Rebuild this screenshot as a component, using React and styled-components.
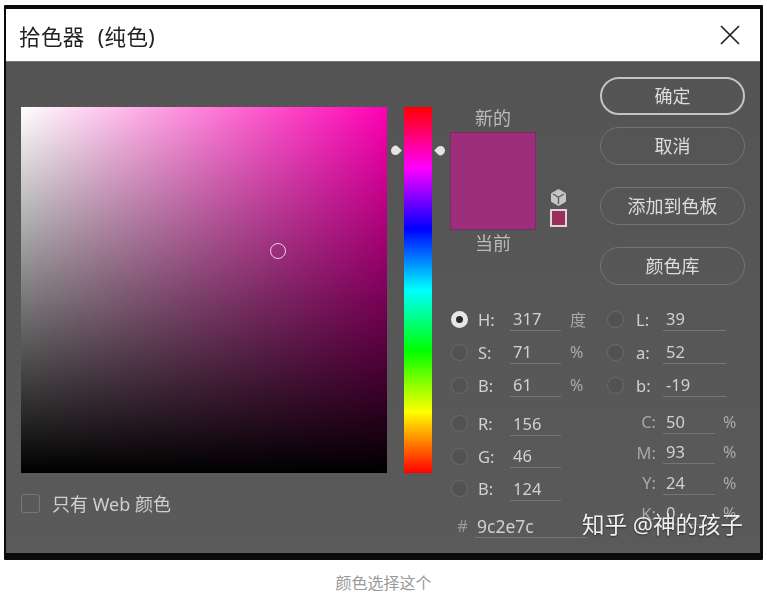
import styled, { createGlobalStyle } from 'styled-components';

const FONT = '"Noto Sans", "Noto Sans CJK SC", sans-serif';

const GlobalStyle = createGlobalStyle`
  body {
    margin: 0;
    background: #fff;
    font-family: ${FONT};
  }
`;

const Page = styled.div`
  width: 767px;
  height: 597px;
  padding: 5px 0 0 4px;
  box-sizing: border-box;
  overflow: hidden;
`;

const Frame = styled.div`
  position: relative;
  width: 759px;
  height: 555px;
  box-sizing: border-box;
  padding: 4px 3px 7px 2px;
  background: #0c090c;
  border-radius: 1px;
  filter: blur(0.45px);
`;

const Dialog = styled.div`
  height: 100%;
  display: flex;
  flex-direction: column;
`;

const TitleBar = styled.div`
  height: 53px;
  flex: none;
  display: flex;
  align-items: center;
  justify-content: space-between;
  padding: 0 20px 0 13px;
  background: #fff;
  border-bottom: 1px solid #777;
  box-sizing: border-box;
`;

const Title = styled.div`
  font-size: 21.5px;
  word-spacing: 7px;
  letter-spacing: 0.4px;
  color: #222;
`;

const Body = styled.div`
  flex: 1;
  display: flex;
  padding-left: 15px;
  background: linear-gradient(#545454, #5a5a5a);
`;

const LeftCol = styled.div`
  width: 366px;
  flex: none;
  padding-top: 45px;
`;

const Picker = styled.div`
  position: relative;
  height: 366px;
  background:
    linear-gradient(to top, #000, rgba(0, 0, 0, 0)),
    linear-gradient(to right, #fff, #ff00b4);
`;

const Marker = styled.span`
  position: absolute;
  left: 249px;
  top: 136px;
  width: 16px;
  height: 16px;
  box-sizing: border-box;
  border: 1.5px solid #f0d0e8;
  border-radius: 50%;
`;

const WebRow = styled.div`
  display: flex;
  align-items: center;
  gap: 12px;
  margin-top: 17px;
  font-size: 18px;
  color: #d0d0d0;
`;

const Checkbox = styled.span`
  width: 19px;
  height: 19px;
  box-sizing: border-box;
  border: 1.5px solid #777;
  border-radius: 3px;
`;

const HueBar = styled.div`
  position: relative;
  flex: none;
  width: 28px;
  height: 366px;
  margin: 45px 0 0 17px;
  background: linear-gradient(#f00, #f0f 16.67%, #00f 33.33%, #0ff 50%, #0f0 66.67%, #ff0 83.33%, #f00);
`;

const Arrow = styled.span`
  position: absolute;
  top: 39px;
  ${(p) => (p.$side === 'left' ? 'left: -13px;' : 'right: -13px;')}
  width: 9px;
  height: 9px;
  background: #e4e4e4;
  border-radius: 40% 0 50% 50%;
  transform: rotate(${(p) => (p.$side === 'left' ? 45 : 225)}deg);
`;

const RightCol = styled.div`
  flex: none;
  width: 300px;
  margin-left: 18px;
`;

const TopRight = styled.div`
  display: flex;
  height: 240.5px;
`;

const ColorCol = styled.div`
  width: 150px;
  flex: none;
  padding-top: 44px;
`;

const SwatchLabel = styled.div`
  width: 86px;
  height: 24px;
  line-height: 24px;
  text-align: center;
  font-size: 18px;
  color: #bbb;
`;

const SwatchRow = styled.div`
  display: flex;
  margin: 2px 0 1px;
`;

const Swatch = styled.div`
  width: 86px;
  height: 98px;
  box-sizing: border-box;
  border: 1px solid #7b2a68;
  background: #9c2e7c;
`;

const SwatchIcons = styled.div`
  display: flex;
  flex-direction: column;
  align-items: center;
  align-self: flex-end;
  gap: 3px;
  margin: 0 0 3px 14px;
`;

const WebSwatch = styled.span`
  width: 17px;
  height: 18px;
  box-sizing: border-box;
  border: 2px solid #e0d4dc;
  background: #9c2e5c;
`;

const Buttons = styled.div`
  display: flex;
  flex-direction: column;
  padding-top: 15px;
`;

const Button = styled.button`
  width: 145px;
  height: 38px;
  margin-top: ${(p) => p.$gap || 0}px;
  padding: 0 0 3px;
  border-radius: 19px;
  border: ${(p) => (p.$primary ? '2px solid #c4c4c4' : '1.5px solid #747474')};
  background: transparent;
  color: #ddd;
  font-family: ${FONT};
  font-size: 18px;
`;

const Fields = styled.div`
  display: flex;
`;

const FieldCol = styled.div`
  width: ${(p) => p.$width}px;
  flex: none;
`;

const Row = styled.div`
  display: flex;
  align-items: center;
  height: ${(p) => p.$height || 33}px;
  margin-top: ${(p) => p.$gap || 0}px;
  font-size: 16.5px;
  color: #d0d0d0;
`;

const Radio = styled.span`
  width: 17px;
  height: 17px;
  flex: none;
  box-sizing: border-box;
  margin-left: ${(p) => p.$offset || 0}px;
  border-radius: 50%;
  ${(p) =>
    p.$on
      ? 'border: 5px solid #e6e6e6; background: #2c2c2c;'
      : 'border: 1.5px solid #6c6c6c; background: #525252;'}
`;

const Label = styled.span`
  width: ${(p) => p.$width}px;
  flex: none;
  margin-left: ${(p) => p.$gap || 0}px;
  text-align: ${(p) => p.$align || 'left'};
  color: ${(p) => p.$color || '#d0d0d0'};
`;

const Value = styled.span`
  width: ${(p) => p.$width}px;
  height: 24px;
  flex: none;
  box-sizing: border-box;
  margin-left: ${(p) => p.$gap || 0}px;
  padding-left: ${(p) => p.$pad ?? 3}px;
  font-size: ${(p) => p.$size || 16.5}px;
  line-height: 24px;
  border-bottom: 1.5px solid #757575;
`;

const Unit = styled.span`
  margin-left: ${(p) => p.$gap}px;
  color: #aaa;
  font-size: ${(p) => p.$size || 16}px;
`;

const Watermark = styled.div`
  position: absolute;
  right: 20px;
  top: 504px;
  font-size: 22.5px;
  line-height: 32px;
  color: #f0f0f0;
  white-space: nowrap;
  text-shadow: 0 1px 2px rgba(0, 0, 0, 0.5);
`;

const Caption = styled.div`
  margin-top: 12px;
  padding-right: 4px;
  text-align: center;
  font-size: 16px;
  line-height: 22px;
  color: #999;
`;

const hsb = [
  { key: 'H', value: '317', unit: '度', on: true },
  { key: 'S', value: '71', unit: '%' },
  { key: 'B', value: '61', unit: '%' },
];
const rgb = [
  { key: 'R', value: '156' },
  { key: 'G', value: '46' },
  { key: 'B', value: '124' },
];
const lab = [
  { key: 'L', value: '39' },
  { key: 'a', value: '52' },
  { key: 'b', value: '-19' },
];
const cmyk = [
  { key: 'C', value: '50' },
  { key: 'M', value: '93' },
  { key: 'Y', value: '24' },
  { key: 'K', value: '0' },
];

const CloseIcon = () => (
  <svg width="20" height="20" viewBox="0 0 20 20" fill="none" stroke="#222" strokeWidth="1.7">
    <path d="M1 1 L19 19 M19 1 L1 19" />
  </svg>
);

const CubeIcon = () => (
  <svg width="17" height="17" viewBox="0 0 17 17">
    <path d="M8.5 0.5 L15.5 4.5 V12.5 L8.5 16.5 L1.5 12.5 V4.5 Z" fill="#c6c6c6" stroke="#c6c6c6" strokeLinejoin="round" />
    <path d="M3 5 L8.5 8.2 L14 5 M8.5 8.2 V15" fill="none" stroke="#5a5a5a" strokeWidth="1.3" />
  </svg>
);

export default function App() {
  return (
    <Page>
      <GlobalStyle />
      <Frame>
        <Dialog>
          <TitleBar>
            <Title>拾色器 (纯色)</Title>
            <CloseIcon />
          </TitleBar>
          <Body>
            <LeftCol>
              <Picker>
                <Marker />
              </Picker>
              <WebRow>
                <Checkbox />
                <span>只有 Web 颜色</span>
              </WebRow>
            </LeftCol>
            <HueBar>
              <Arrow $side="left" />
              <Arrow $side="right" />
            </HueBar>
            <RightCol>
              <TopRight>
                <ColorCol>
                  <SwatchLabel>新的</SwatchLabel>
                  <SwatchRow>
                    <Swatch />
                    <SwatchIcons>
                      <CubeIcon />
                      <WebSwatch />
                    </SwatchIcons>
                  </SwatchRow>
                  <SwatchLabel>当前</SwatchLabel>
                </ColorCol>
                <Buttons>
                  <Button $primary>确定</Button>
                  <Button $gap={12}>取消</Button>
                  <Button $gap={22}>添加到色板</Button>
                  <Button $gap={22}>颜色库</Button>
                </Buttons>
              </TopRight>
              <Fields>
                <FieldCol $width={157}>
                  {hsb.map((f) => (
                    <Row key={f.key}>
                      <Radio $offset={1} $on={f.on} />
                      <Label $width={32} $gap={10}>{f.key}:</Label>
                      <Value $width={51}>{f.value}</Value>
                      <Unit $gap={9}>{f.unit}</Unit>
                    </Row>
                  ))}
                  {rgb.map((f, i) => (
                    <Row key={f.key} $height={32.5} $gap={i === 0 ? 6 : 0}>
                      <Radio $offset={1} />
                      <Label $width={32} $gap={10}>{f.key}:</Label>
                      <Value $width={51}>{f.value}</Value>
                    </Row>
                  ))}
                  <Row $gap={4}>
                    <Label $width={25} $align="center" $color="#999">#</Label>
                    <Value $width={112} $pad={2} $size={17.5}>9c2e7c</Value>
                  </Row>
                </FieldCol>
                <FieldCol $width={140}>
                  {lab.map((f) => (
                    <Row key={f.key}>
                      <Radio />
                      <Label $width={27} $gap={12}>{f.key}:</Label>
                      <Value $width={63}>{f.value}</Value>
                    </Row>
                  ))}
                  {cmyk.map((f, i) => (
                    <Row key={f.key} $height={30.5} $gap={i === 0 ? 5 : 0}>
                      <Label $width={49} $align="right" $color="#a8a8a8">{f.key}:</Label>
                      <Value $width={52} $gap={7}>{f.value}</Value>
                      <Unit $gap={8}>%</Unit>
                    </Row>
                  ))}
                </FieldCol>
              </Fields>
            </RightCol>
          </Body>
        </Dialog>
        <Watermark>知乎 @神的孩子</Watermark>
      </Frame>
      <Caption>颜色选择这个</Caption>
    </Page>
  );
}
